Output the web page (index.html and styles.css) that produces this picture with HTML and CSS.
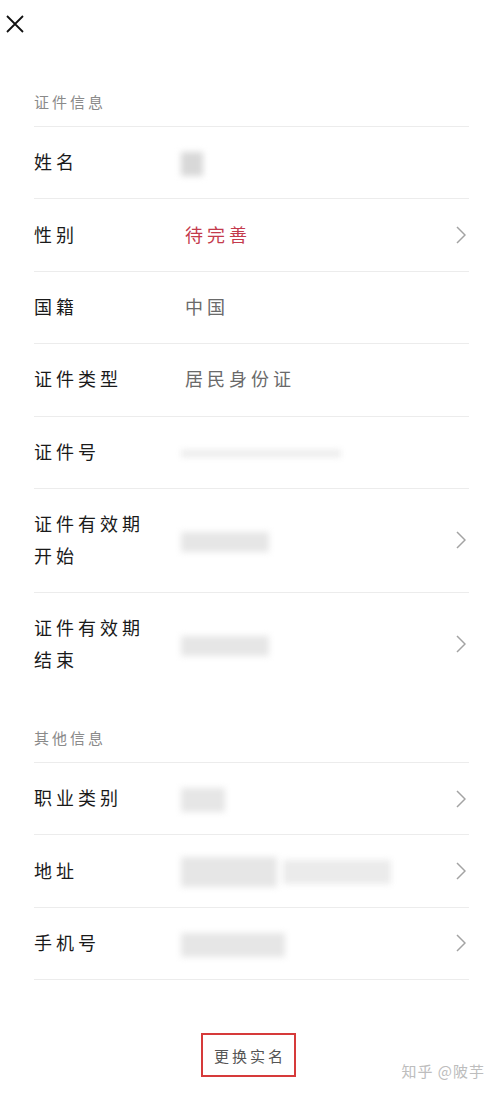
FILE: index.html
```html
<!DOCTYPE html>
<html lang="zh-CN">
<head>
    <meta charset="UTF-8">
    <meta name="viewport" content="width=device-width, initial-scale=1.0">
    <title>实名信息</title>
    <link rel="stylesheet" href="styles.css">
</head>
<body>
    <div class="page">
        <div class="topbar">
            <svg class="close" width="18" height="18" viewBox="0 0 18 18">
                <path d="M1 1 L17 17 M17 1 L1 17" stroke="#111" stroke-width="1.8" fill="none"/>
            </svg>
        </div>

        <!-- 证件信息 -->
        <div class="section">
            <div class="section-title">证件信息</div>
            <div class="row">
                <span class="label">姓名</span>
                <span class="value"><span class="blur blur-name"></span></span>
            </div>
            <div class="row">
                <span class="label">性别</span>
                <span class="value value-warn">待完善</span>
                <svg class="chevron" width="10" height="18" viewBox="0 0 10 18"><path d="M1 1 L9 9 L1 17" stroke="#a3a3a3" stroke-width="1.5" fill="none"/></svg>
            </div>
            <div class="row">
                <span class="label">国籍</span>
                <span class="value">中国</span>
            </div>
            <div class="row">
                <span class="label">证件类型</span>
                <span class="value">居民身份证</span>
            </div>
            <div class="row">
                <span class="label">证件号</span>
                <span class="value"><span class="blur blur-line"></span></span>
            </div>
            <div class="row row-tall">
                <span class="label">证件有效期<br>开始</span>
                <span class="value"><span class="blur blur-date"></span></span>
                <svg class="chevron" width="10" height="18" viewBox="0 0 10 18"><path d="M1 1 L9 9 L1 17" stroke="#a3a3a3" stroke-width="1.5" fill="none"/></svg>
            </div>
            <div class="row row-tall row-last">
                <span class="label">证件有效期<br>结束</span>
                <span class="value"><span class="blur blur-date"></span></span>
                <svg class="chevron" width="10" height="18" viewBox="0 0 10 18"><path d="M1 1 L9 9 L1 17" stroke="#a3a3a3" stroke-width="1.5" fill="none"/></svg>
            </div>
        </div>

        <!-- 其他信息 -->
        <div class="section">
            <div class="section-title section-title-gap">其他信息</div>
            <div class="row">
                <span class="label">职业类别</span>
                <span class="value"><span class="blur blur-job"></span></span>
                <svg class="chevron" width="10" height="18" viewBox="0 0 10 18"><path d="M1 1 L9 9 L1 17" stroke="#a3a3a3" stroke-width="1.5" fill="none"/></svg>
            </div>
            <div class="row">
                <span class="label">地址</span>
                <span class="value"><span class="blur blur-addr"></span><span class="blur blur-addr2"></span></span>
                <svg class="chevron" width="10" height="18" viewBox="0 0 10 18"><path d="M1 1 L9 9 L1 17" stroke="#a3a3a3" stroke-width="1.5" fill="none"/></svg>
            </div>
            <div class="row">
                <span class="label">手机号</span>
                <span class="value"><span class="blur blur-phone"></span></span>
                <svg class="chevron" width="10" height="18" viewBox="0 0 10 18"><path d="M1 1 L9 9 L1 17" stroke="#a3a3a3" stroke-width="1.5" fill="none"/></svg>
            </div>
        </div>

        <div class="actions">
            <button class="change-btn">更换实名</button>
        </div>

        <div class="watermark">知乎 @陂芋</div>
    </div>
</body>
</html>
```

FILE: styles.css
```css
body {
    margin: 0;
    background-color: #fff;
    font-family: "Noto Sans CJK SC", "Noto Sans", sans-serif;
    color: #1a1a1a;
}
.page {
    position: relative;
    width: 497px;
    height: 1097px;
    overflow: hidden;
}
.topbar {
    height: 75px;
    padding: 15px 0 0 6px;
}
.close {
    display: block;
}
.section {
    margin: 0 28px 0 34px;
}
.section-title {
    font-size: 15px;
    line-height: 24px;
    letter-spacing: 3px;
    color: #8a8a8a;
    padding-bottom: 12px;
    border-bottom: 1px solid #ececec;
}
.section-title-gap {
    padding-top: 30px;
}
.row {
    display: flex;
    align-items: center;
    min-height: 71.4px;
    border-bottom: 1px solid #ececec;
}
.row-tall {
    min-height: 103px;
}
.row-last {
    border-bottom: none;
}
.label {
    width: 151px;
    padding-bottom: 3px;
    font-size: 18px;
    line-height: 32px;
    letter-spacing: 4px;
    color: #1a1a1a;
}
.value {
    flex: 1;
    padding-bottom: 3px;
    font-size: 18px;
    line-height: 32px;
    letter-spacing: 4px;
    color: #6a6a6a;
}
.value-warn {
    color: #c43a4c;
}
.chevron {
    margin-right: 3px;
}
.blur {
    display: inline-block;
    vertical-align: middle;
    background-color: #e6e6e6;
    filter: blur(3px);
}
.blur-name {
    width: 22px;
    height: 24px;
    margin-left: -4px;
    background-color: #d8d8d8;
}
.blur-line {
    width: 160px;
    height: 7px;
    margin-left: -4px;
    background-color: #ebebeb;
}
.blur-date {
    width: 88px;
    height: 20px;
    margin-left: -4px;
}
.blur-job {
    width: 44px;
    height: 24px;
    margin-left: -4px;
}
.blur-addr {
    width: 96px;
    height: 30px;
    margin-left: -4px;
}
.blur-addr2 {
    width: 108px;
    height: 24px;
    margin-left: 6px;
    background-color: #ebebeb;
}
.blur-phone {
    width: 104px;
    height: 24px;
    margin-left: -4px;
}
.actions {
    display: flex;
    justify-content: center;
    margin-top: 53px;
}
.change-btn {
    width: 95px;
    height: 44px;
    padding: 0;
    border: 2px solid #d63a3a;
    background-color: #fff;
    font-family: "Noto Sans CJK SC", sans-serif;
    font-size: 15px;
    letter-spacing: 3px;
    text-indent: 3px;
    color: #555;
}
.watermark {
    position: absolute;
    right: 12px;
    top: 1060px;
    font-size: 15px;
    color: #bdbdbd;
    letter-spacing: 1px;
}
```
